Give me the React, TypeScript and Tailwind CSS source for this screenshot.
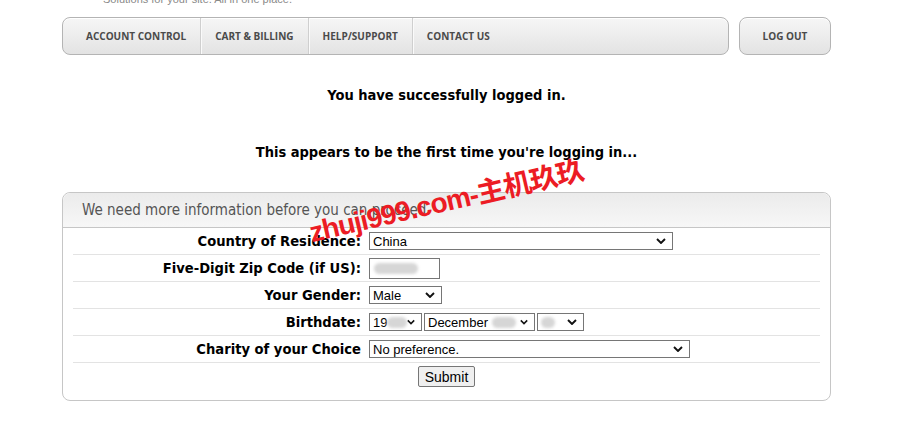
import type { ReactNode } from 'react'

const navItems = ['ACCOUNT CONTROL', 'CART & BILLING', 'HELP/SUPPORT', 'CONTACT US']

function Chevron({ small }: { small?: boolean }) {
  return (
    <svg
      className="pointer-events-none absolute right-[6px] top-1/2 -translate-y-1/2"
      width={small ? 8 : 10}
      height="6"
      viewBox="0 0 10 6"
      fill="none"
    >
      <path d="M1 1l4 4 4-4" stroke="#111" strokeWidth="1.9" />
    </svg>
  )
}

function Select({ className, children, small }: { className: string; children: ReactNode; small?: boolean }) {
  return (
    <div className={`relative h-[18px] border border-[#767676] bg-white ${className}`}>
      <div className="flex h-full items-center overflow-hidden whitespace-nowrap pl-[3px] pr-[14px] font-['Liberation_Sans',Arial,sans-serif] text-[13px] leading-none text-black">
        {children}
      </div>
      <Chevron small={small} />
    </div>
  )
}

function Blur({ w }: { w: number }) {
  return <span className="inline-block h-[11px] rounded-full bg-[#d6d6d6] blur-[1.5px]" style={{ width: w }} />
}

function Row({ label, children }: { label: string; children: ReactNode }) {
  return (
    <div className="flex h-[27px] items-center border-b border-[#e3e3e3]">
      <div className="w-[288px] text-right text-[14.6px] font-bold text-black">{label}</div>
      <div className="flex items-center gap-[2px] pl-[8px]">{children}</div>
    </div>
  )
}

export default function App() {
  return (
    <div className="relative h-[441px] w-[912px] overflow-hidden bg-white font-['DejaVu_Sans_Condensed','DejaVu_Sans',sans-serif]">
      <div className="ml-[62px] w-[769px]">
        {/* tagline, cut off by the top of the window */}
        <div className="h-[17px] overflow-hidden pl-[41px]">
          <p className="-mt-[7px] font-['Liberation_Sans',Arial,sans-serif] text-[11px] leading-[12px] text-[#8a8a8a]">
            Solutions for your site. All in one place.
          </p>
        </div>

        {/* nav */}
        <div className="flex h-[38px] gap-[10px] font-['Open_Sans',sans-serif] text-[10px] font-bold text-[#4a4a4a]">
          <nav className="flex flex-1 items-stretch rounded-[8px] border border-[#b4b4b4] bg-gradient-to-b from-[#f6f6f6] to-[#e3e3e3] pl-[9px] shadow-[inset_0_1px_0_#fff]">
            {navItems.map((item, i) => (
              <div
                key={item}
                className={`flex items-center px-[14px] pt-[1px] ${i < navItems.length - 1 ? 'border-r border-[#cfcfcf] shadow-[1px_0_0_#fafafa]' : ''}`}
              >
                {item}
              </div>
            ))}
          </nav>
          <button className="w-[92px] rounded-[8px] border border-[#b4b4b4] bg-gradient-to-b from-[#f6f6f6] to-[#e3e3e3] text-[10px] font-bold text-[#4a4a4a] shadow-[inset_0_1px_0_#fff]">
            LOG OUT
          </button>
        </div>

        <p className="mt-[29px] text-center text-[14.5px] font-bold leading-[22px] text-black">You have successfully logged in.</p>
        <p className="mt-[35px] text-center text-[14.5px] font-bold leading-[22px] text-black">
          This appears to be the first time you're logging in...
        </p>

        {/* form panel */}
        <div className="mt-[29px] h-[209px] rounded-[8px] border border-[#c6c6c6]">
          <div className="flex h-[35px] items-center rounded-t-[8px] border-b border-[#c6c6c6] bg-gradient-to-b from-[#ebebeb] to-[#f7f7f7] pl-[19px] text-[15px] text-[#555]">
            We need more information before you can proceed.
          </div>
          <div className="mx-[10px]">
            <Row label="Country of Residence:">
              <Select className="w-[304px]">China</Select>
            </Row>
            <Row label="Five-Digit Zip Code (if US):">
              <div className="flex h-[21px] w-[71px] items-center border border-[#767676] bg-white pl-[4px]">
                <Blur w={44} />
              </div>
            </Row>
            <Row label="Your Gender:">
              <Select className="w-[73px]">Male</Select>
            </Row>
            <Row label="Birthdate:">
              <Select className="w-[53px]" small>
                19
                <Blur w={20} />
              </Select>
              <Select className="w-[111px]" small>
                December&nbsp;
                <Blur w={24} />
              </Select>
              <Select className="w-[47px]">
                <Blur w={14} />
              </Select>
            </Row>
            <Row label="Charity of your Choice">
              <Select className="w-[321px]">No preference.</Select>
            </Row>
            <div className="flex justify-center pt-[3px]">
              <button className="h-[21px] w-[57px] rounded-[2px] border border-[#767676] bg-[#efefef] font-['Liberation_Sans',Arial,sans-serif] text-[14px] text-black">
                Submit
              </button>
            </div>
          </div>
        </div>
      </div>

      {/* watermark */}
      <div className="pointer-events-none absolute left-[313px] top-[219px] origin-bottom-left -rotate-[13deg] whitespace-nowrap font-['Liberation_Sans','Noto_Sans_CJK_SC',sans-serif] text-[28px] font-bold leading-[28px] tracking-[-1px] text-[#ec1c24]">
        zhuji999.com-主机玖玖
      </div>
    </div>
  )
}
